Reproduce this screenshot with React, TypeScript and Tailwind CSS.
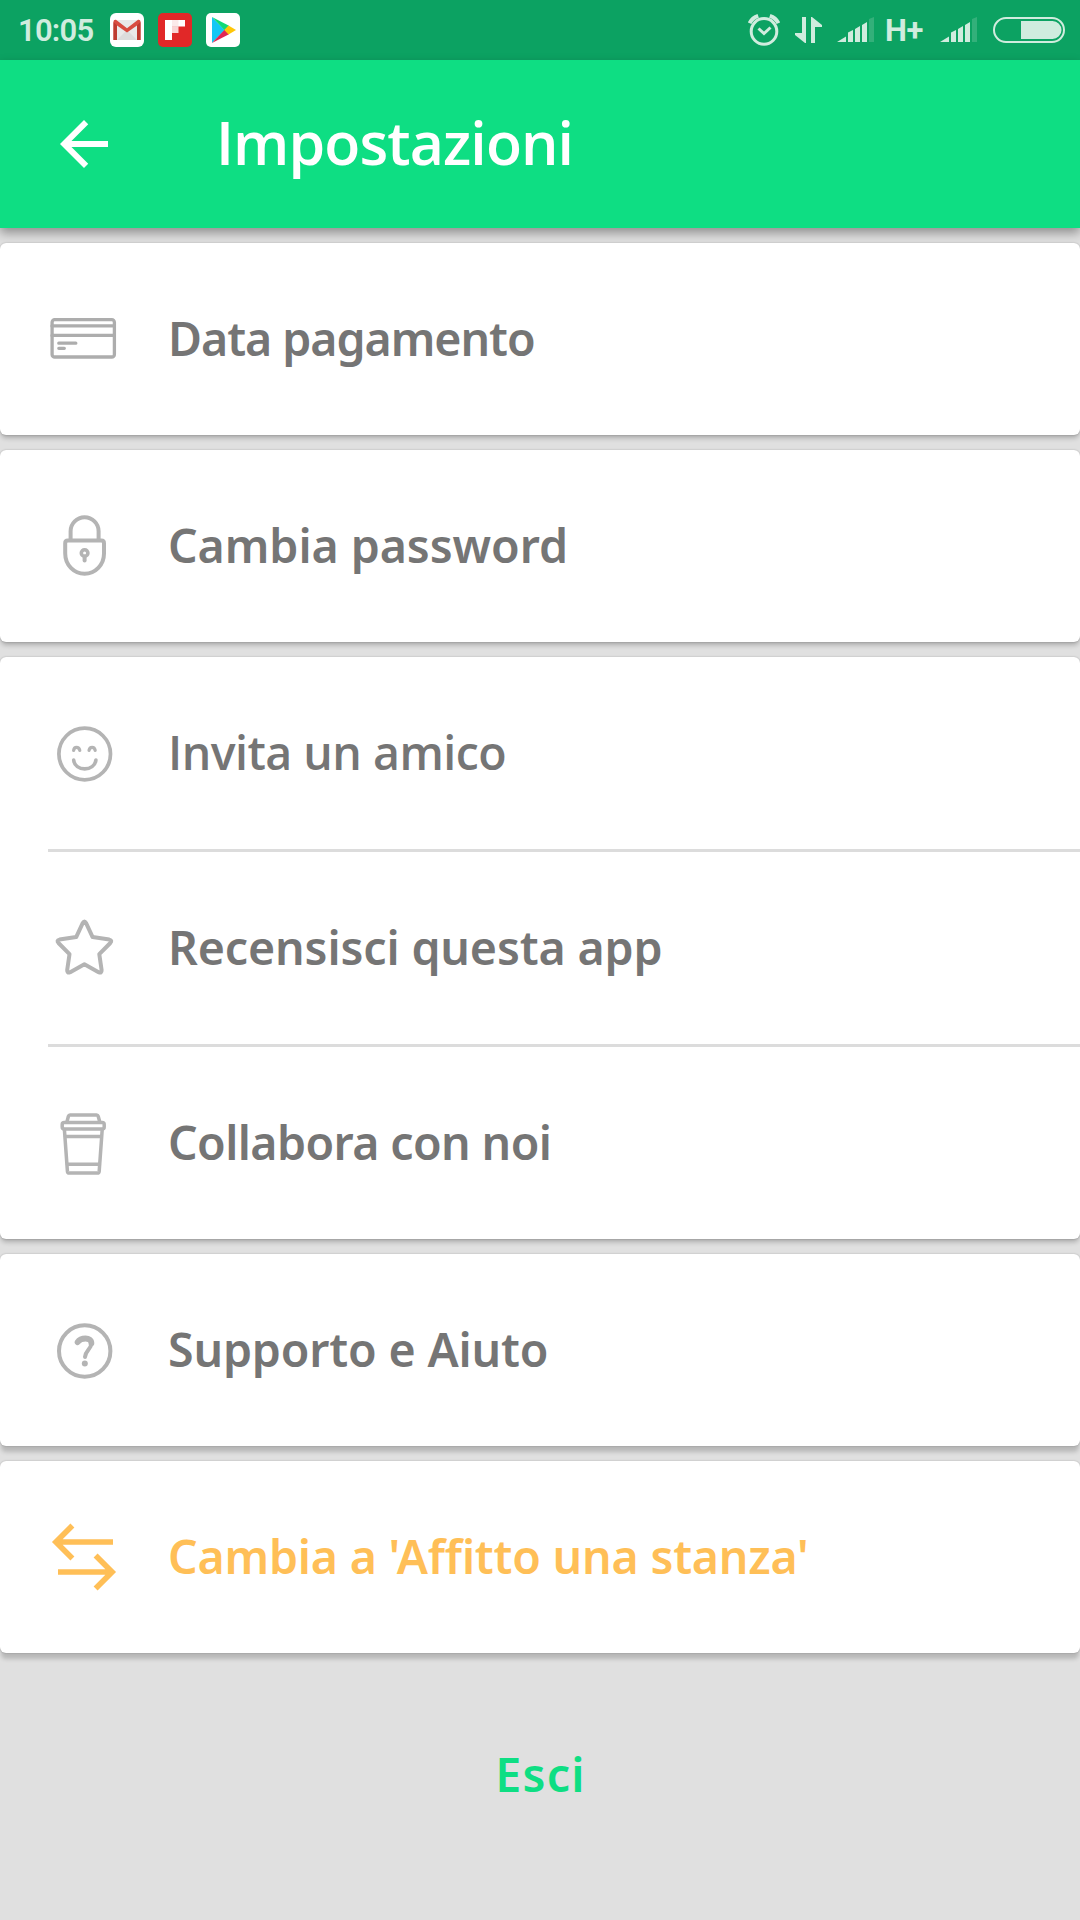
import React from "react";
import type { ReactNode } from "react";

const NOTO = "font-['Noto_Sans',sans-serif] font-semibold";
const OPEN = "font-['Open_Sans',sans-serif] font-semibold";

function Icon({ children }: { children: ReactNode }) {
  return (
    <svg
      className="size-[72px] shrink-0"
      viewBox="0 0 72 72"
      fill="none"
      stroke="currentColor"
      strokeWidth="4"
      strokeLinecap="round"
      strokeLinejoin="round"
    >
      {children}
    </svg>
  );
}

const CardIcon = () => (
  <Icon>
    <g stroke="#adadad" strokeWidth="3.3">
      <rect x="4.1" y="16.6" width="62.3" height="37.4" rx="2.6" />
      <path d="M4 22.9H66.4M4 32.4H66.4M10.8 40.2H27.8M10.8 45.3H16.3" />
    </g>
  </Icon>
);

const LockIcon = () => (
  <Icon>
    <path d="M22.6 30V21.2a14 14 0 0 1 28 0V30" />
    <path d="M19.8 30.6H53.4Q56 30.6 56 33.2V43.6C56 55 47.3 63.8 36.6 63.8S17.2 55 17.2 43.6V33.2Q17.2 30.6 19.8 30.6Z" />
    <circle cx="36.6" cy="43" r="3.3" strokeWidth="3.6" />
    <path d="M36.6 46.5V50.4" />
  </Icon>
);

const SmileIcon = () => (
  <Icon>
    <circle cx="36.7" cy="37" r="25.8" strokeWidth="3.7" />
    <path d="M25.6 33.4C26.2 29.4 30.8 29.4 31.8 33.4M41 33.4C41.8 29.4 46.4 29.4 47.2 33.4" strokeWidth="3.2" />
    <path d="M25.7 43C26.5 54.8 46.8 54.8 47.9 43" strokeWidth="3.6" />
  </Icon>
);

const StarIcon = () => (
  <Icon>
    <path d="M34.8 10.9Q36.4 7.9 38 10.9L44.6 25.1L61.3 27.6Q64.6 28.4 62.3 31L51.3 42.2L53.6 58Q53.8 61.6 50.6 60.2L36.4 52.3L22.2 60.2Q19 61.6 19.2 58L21.5 42.2L10.5 31Q8.2 28.4 11.5 27.6L28.2 25.1Z" />
  </Icon>
);

const CupIcon = () => (
  <Icon>
    <g strokeWidth="3.5">
      <path d="M18.9 15L20.4 9.3Q20.8 8 22 8H48.6Q49.8 8 50.2 9.3L51.8 15" />
      <rect x="14.2" y="15.4" width="42" height="6.6" rx="2" />
      <path d="M16.4 22.6L19.4 64.2Q19.6 66 21.2 66H49.4Q51 66 51.2 64.2L54.2 22.6" />
      <path d="M17.4 29.4H53.2M19.4 57.2H51.4" />
    </g>
  </Icon>
);

const HelpIcon = () => (
  <Icon>
    <circle cx="36.7" cy="37" r="25.7" />
    <path d="M29.6 28.2C32.6 23.6 43.4 22.6 43.4 29.2" strokeWidth="5.8" />
    <path d="M43.4 29C43.4 35.2 37.6 36.2 37 43" strokeWidth="4" />
    <circle cx="36.8" cy="49.6" r="3" fill="currentColor" stroke="none" />
  </Icon>
);

const SwapIcon = () => (
  <Icon>
    <g strokeWidth="5.6" strokeLinecap="butt" strokeLinejoin="miter">
      <path d="M65 21H9M24.4 4.5L7.9 21L24.4 37.5" />
      <path d="M10 51H63M47.6 34.5L64.1 51L47.6 67.5" />
    </g>
  </Icon>
);

interface RowProps {
  icon: ReactNode;
  label: string;
  spacing: string;
  font?: string;
  accent?: boolean;
}

function Row({ icon, label, spacing, font = NOTO, accent }: RowProps) {
  return (
    <div className={`flex h-[192px] items-center gap-12 pl-12 ${accent ? "text-[#ffbf57]" : "text-[#b4b4b4]"}`}>
      {icon}
      <span className={`pb-[2px] text-[46.5px] leading-none whitespace-nowrap ${font} ${spacing} ${accent ? "" : "text-[#757575]"}`}>
        {label}
      </span>
    </div>
  );
}

function Card({ children, low }: { children: ReactNode; low?: boolean }) {
  return (
    <section
      className={`relative rounded-[6px] bg-white ${
        low
          ? "shadow-[0_7px_4px_-1px_rgba(0,0,0,0.18),0_0_2px_rgba(0,0,0,0.25)]"
          : "shadow-[0_4px_5px_-1px_rgba(0,0,0,0.24),0_0_2px_rgba(0,0,0,0.25)]"
      }`}
    >
      {children}
    </section>
  );
}

const Divider = () => <div className="ml-12 h-[3px] bg-[#dcdcdc]" />;

const Signal = () => (
  <svg className="h-[26px] w-[38px]" viewBox="0 0 38 26" fill="currentColor">
    <path d="M0 25L9 19.5V25ZM11 15.5L16 13V25H11ZM18 12L23 9V25H18ZM25 8L30 5V25H25Z" />
    <path d="M32 2L37 0V25H32Z" opacity="0.2" />
  </svg>
);

function StatusBar() {
  return (
    <div className="flex h-[60px] items-center bg-[#0ca262] pr-[15px] pl-[18px] font-['Roboto',sans-serif] text-[#d0ecde]">
      <span className="w-[92px] text-[31px] leading-none font-semibold tracking-[-0.8px]">10:05</span>
      <div className="flex gap-[14px]">
        <svg className="size-[34px]" viewBox="0 0 34 34">
          <rect width="34" height="34" rx="6" fill="#fff" />
          <path d="M4 7H30V27H4Z" fill="#e9e9e9" />
          <path d="M17 17L27 27H7Z" fill="#dcdcdc" />
          <path d="M3.5 8.5Q3.5 6.5 6 6.8L17 15.3L28 6.8Q30.5 6.5 30.5 8.5V27H27V12.4L17 19.5L7 12.4V27H3.5Z" fill="#d84c40" />
          <path d="M3.5 9L7 12.4V27H3.5ZM30.5 9L27 12.4V27H30.5Z" fill="#be3b30" />
        </svg>
        <svg className="size-[34px]" viewBox="0 0 34 34">
          <rect width="34" height="34" rx="5" fill="#e12828" />
          <path d="M7 7H14V27H7Z" fill="#fff" />
          <path d="M14 7H27V13.5H14Z" fill="#fff" />
          <path d="M14 13.5H20.5V20H14Z" fill="#f9d4d4" />
          <path d="M14 7H20.5V13.5H14Z" fill="#fbeaea" />
        </svg>
        <svg className="size-[34px]" viewBox="0 0 34 34">
          <rect width="34" height="34" rx="5" fill="#fff" />
          <path d="M6 4V30L18.5 17Z" fill="#14c7f5" />
          <path d="M6 4L23 12.8L18.5 17.3Z" fill="#10d977" />
          <path d="M6 30L23 21.2L18.5 16.7Z" fill="#e12653" />
          <path d="M22.5 12.5L30 17L22.5 21.5L18.3 17Z" fill="#ffc608" />
        </svg>
      </div>
      <div className="ml-auto flex items-center">
        <svg className="h-8 w-8" viewBox="0 0 32 32" fill="none" stroke="currentColor" strokeWidth="3">
          <circle cx="16" cy="17.4" r="12.8" />
          <path d="M10.5 14.5L16 19.5L22.5 13.5" />
          <path d="M1.6 9.2Q4 4 10.2 1.9M30.4 9.2Q28 4 21.8 1.9" strokeWidth="4" />
        </svg>
        <svg className="ml-[15px] h-[26px] w-[27px]" viewBox="0 0 27 26" fill="currentColor">
          <path d="M7 0H11V26H10L0 18V16H7ZM16 0H17L27 8V10H20V26H16Z" />
        </svg>
        <div className="ml-[15px]"><Signal /></div>
        <span className="ml-[10px] w-[38px] text-[31px] leading-none font-bold tracking-[-0.5px]">H+</span>
        <div className="ml-[17px]"><Signal /></div>
        <svg className="ml-[15px] h-[26px] w-[72px]" viewBox="0 0 72 26">
          <rect x="1" y="1" width="70" height="24" rx="12" fill="none" stroke="currentColor" strokeWidth="2" />
          <path d="M28 4H59.5A9 9 0 0 1 59.5 22H28Z" fill="currentColor" />
        </svg>
      </div>
    </div>
  );
}

export default function App() {
  return (
    <div className="flex h-[1920px] w-[1080px] flex-col overflow-hidden bg-[#e0e0e0]">
      <StatusBar />
      <header className="flex h-[168px] items-center bg-[#0ede83] pl-[48px] text-white shadow-[0_5px_10px_rgba(0,0,0,0.36)]">
        <svg className="size-[72px]" viewBox="0 0 24 24" fill="currentColor">
          <path d="M20 11H7.83l5.59-5.59L12 4l-8 8 8 8 1.41-1.41L7.83 13H20v-2z" />
        </svg>
        <h1 className={`ml-24 pb-[4px] text-[59px] leading-none tracking-[-0.9px] ${OPEN}`}>Impostazioni</h1>
      </header>
      <main className="flex flex-col gap-[15px] pt-[15px]">
        <Card>
          <Row icon={<CardIcon />} label="Data pagamento" spacing="tracking-[-1.04px]" />
        </Card>
        <Card>
          <Row icon={<LockIcon />} label="Cambia password" spacing="tracking-[-0.06px]" />
        </Card>
        <Card>
          <Row icon={<SmileIcon />} label="Invita un amico" spacing="tracking-[-0.52px]" font={OPEN} />
          <Divider />
          <Row icon={<StarIcon />} label="Recensisci questa app" spacing="tracking-[-0.14px]" />
          <Divider />
          <Row icon={<CupIcon />} label="Collabora con noi" spacing="tracking-[-0.6px]" />
        </Card>
        <Card low>
          <Row icon={<HelpIcon />} label="Supporto e Aiuto" spacing="tracking-[-0.17px]" />
        </Card>
        <Card low>
          <Row icon={<SwapIcon />} label="Cambia a 'Affitto una stanza'" spacing="tracking-[-0.2px]" accent />
        </Card>
      </main>
      <button className={`mt-[97px] w-full pl-px text-center text-[46.5px] leading-[48px] tracking-[1.3px] text-[#0ede83] ${NOTO}`}>
        Esci
      </button>
    </div>
  );
}
